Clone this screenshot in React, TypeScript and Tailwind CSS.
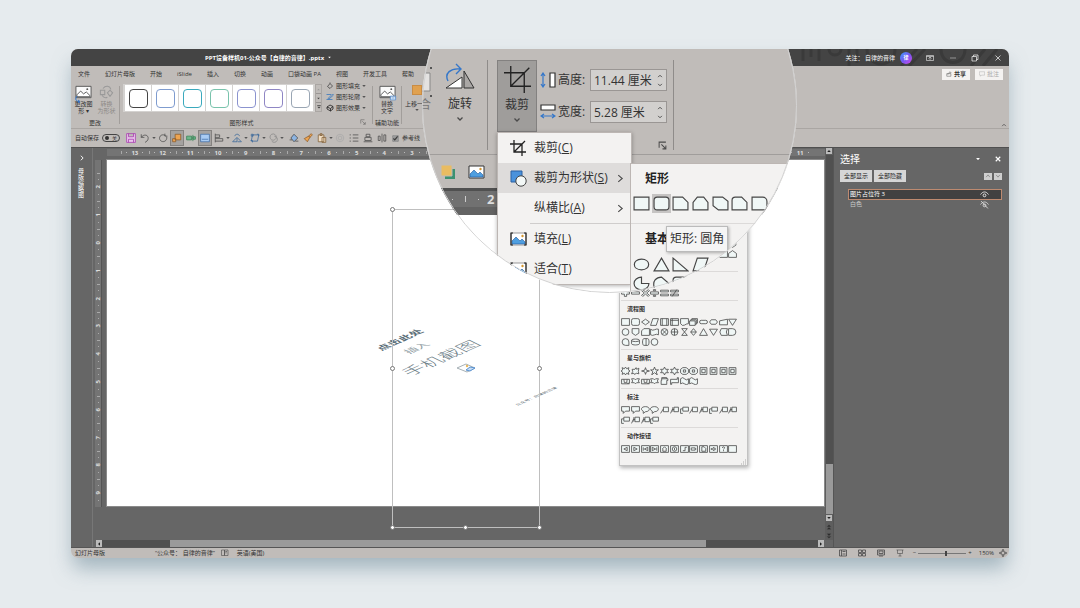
import React from "react";

/* ---------- shared drawing helpers ---------- */

type IconProps = { d: string; className?: string; stroke?: string; fill?: string; sw?: number; box?: string };

function Icon({ d, className = "size-2.5", stroke = "#4a4a4a", fill = "none", sw = 1.2, box = "0 0 16 16" }: IconProps) {
  return (
    <svg viewBox={box} className={`shrink-0 ${className}`} fill={fill} stroke={stroke} strokeWidth={sw} aria-hidden="true">
      <path d={d} />
    </svg>
  );
}

function Caret() {
  return <Icon d="M1 4l7 8 7-8z" fill="#555" stroke="none" className="size-1" />;
}

const shapes: Record<string, string> = {
  rect: "M1 1h14v12H1z",
  round: "M4 1h8a3 3 0 0 1 3 3v6a3 3 0 0 1-3 3H4a3 3 0 0 1-3-3V4a3 3 0 0 1 3-3z",
  snip: "M1 1h9l5 5v7H1z",
  snip2: "M5 1h6l4 5v7H1V6z",
  snipDiag: "M1 1h9l5 4v8H6L1 9z",
  snipRound: "M4 1h6l5 5v7H1V4a3 3 0 0 1 3-3z",
  round1: "M1 1h10a4 4 0 0 1 4 4v8H1z",
  diamond: "M8 2l7 5-7 5-7-5z",
  para: "M5 1h10l-4 12H1z",
  inner: "M1 1h14v12H1zM4 1v12M12 1v12",
  innerTop: "M1 1h14v12H1zM4 1v12M1 4h14",
  doc: "M1 1h14v9q-3.500 0-7 2.500T1 10z",
  docs: "M1 5h10v8H1zM3 5V3h10v8h-2M5 3V1h10v8h-2",
  pill: "M4 4h8a3 3 0 0 1 0 6H4a3 3 0 0 1 0-6z",
  hexa: "M4 3h8l3 4-3 4H4L1 7z",
  manual: "M1 5l14-3v10H1z",
  triDown: "M1 2h14L8 13z",
  triUp: "M8 1l7 12H1z",
  rtri: "M1 1v12h14z",
  circle: "M8 1a6 6 0 1 1 0 12A6 6 0 0 1 8 1z",
  oval: "M8 2c9 0 9 10 0 10S-1 2 8 2z",
  shield: "M2 1h12v8l-6 4-6-4z",
  card: "M5 1h10v12H1V5z",
  tape: "M1 2q3.500 3 7 1t7-1v10q-3.500-2-7 0t-7 0z",
  circX: "M8 1a6 6 0 1 1 0 12A6 6 0 0 1 8 1zM4 3l8 8M12 3l-8 8",
  circPlus: "M8 1a6 6 0 1 1 0 12A6 6 0 0 1 8 1zM8 1v12M2 7h12",
  hour: "M3 1h10L3 13h10z",
  sort: "M8 1l5 6-5 6-5-6zM3 7h10",
  stored: "M4 1h11q-4 6 0 12H4Q-1 7 4 1z",
  delay: "M1 1h7a6 6 0 0 1 0 12H1z",
  seq: "M14 13H8a6 6 0 1 1 6-6z",
  disk: "M1 4c0-3 14-3 14 0v6c0 3-14 3-14 0zM1 4c0 3 14 3 14 0",
  drum: "M5 1h7c3 0 3 12 0 12H5C2 13 2 1 5 1zM9 1v12",
  burst: "M8 0l2 3 4-2-1 4 3 2-3 2 1 4-4-2-2 3-2-3-4 2 1-4-3-2 3-2-1-4 4 2z",
  burst2: "M2 4l5 0 2-3 1 3 4-2-1 6 1 4-4-1-4 2-1-2-4 1 2-4z",
  star4: "M8 1l1.500 4.500L15 7 9.500 8.500 8 13 6.500 8.500 1 7l5.500-1.500z",
  star5: "M8 0l2 5h5l-4 3 2 6-5-4-5 4 2-6-4-3h5z",
  star6: "M8 0l2 4h5l-3 3 3 3h-5l-2 4-2-4H1l3-3-3-3h5z",
  gear: "M5 1h6l4 3v6l-4 3H5l-4-3V4zM6 5h4v4H6z",
  seal: "M2 1h12v12H2zM5 4h6v6H5z",
  ribbon: "M1 9V4h4l1 6h4l1-6h4v7h-4M1 9v3h14M5 4h6",
  ribbon2: "M1 3h5l2 2 2-2h5l-2 4 2 3h-5l-2 2-2-2H1l2-3z",
  scroll: "M3 3h11v3h-2v7H2V6h1zM3 3V1h9v2",
  scrollH: "M1 4h12V1h2v9H3v3H1z",
  wave: "M1 3q4-4 7 0t7 0v9q-4 3-7 0t-7 0z",
  call: "M1 1h14v8H8l-4 4V9H1z",
  callO: "M8 1c9 0 9 9 0 9l-4 3 0-4C-2 6 1 1 8 1z",
  line1: "M6 2h9v8H6zM6 5l-5 8",
  line2: "M7 2h8v8H7zM7 6H4l-3 7M5 2v8",
  line3: "M5 2h10v7H5zM5 5H1v8h4",
  plus: "M6 1h4v4h5v4h-5v4H6V9H1V5h5z",
  minus: "M1 5h14v4H1z",
  times: "M3 1l5 4 5-4 2 2-5 4 5 4-2 2-5-4-5 4-2-2 5-4-5-4z",
  div: "M1 5h14v4H1zM6 1h4v2H6zM6 11h4v2H6z",
  eq: "M1 2h14v3H1zM1 9h14v3H1z",
  neq: "M1 2h14v3H1zM1 9h14v3H1zM4 13L12 1",
  house: "M1 6l7-5 7 5v7H1z",
  bL: "M1 1h14v12H1zM11 4L5 7l6 3z",
  bR: "M1 1h14v12H1zM5 4l6 3-6 3z",
  bLL: "M1 1h14v12H1zM12 4L6 7l6 3zM4 4v6",
  bRR: "M1 1h14v12H1zM4 4l6 3-6 3zM12 4v6",
  bHome: "M1 1h14v12H1zM4 7l4-4 4 4M5 7v4h6V7",
  bInfo: "M1 1h14v12H1zM8 3a4 4 0 1 1 0 8 4 4 0 0 1 0-8zM8 5v4",
  bBack: "M1 1h14v12H1zM5 10h4V4h3",
  bFilm: "M1 1h14v12H1zM4 5h7v4H4zM11 7h2",
  bDoc: "M1 1h14v12H1zM5 3h4l3 3v5H5z",
  bSound: "M1 1h14v12H1zM4 6h2l3-2v6L6 8H4zM11 5v4",
  bHelp: "M1 1h14v12H1zM6 5c0-3 4-2 4 0 0 1-2 1-2 3M8 9v2",
  pie: "M8 1v6h7A7 6 0 1 1 8 1z",
  arcTop: "M2 13C-2 4 4 1 8 1l7 6v6z",
};

function Shape({ kind, large = false }: { kind: string; large?: boolean }) {
  return (
    <svg viewBox="0 0 16 14" className={large ? "w-[17px] h-[15px]" : "w-[9px] h-2"} fill="#f0f7f6" stroke="#464646" strokeWidth={large ? 1.1 : 1.4} aria-hidden="true">
      <path d={shapes[kind]} />
    </svg>
  );
}

/* ---------- title bar, tabs, ribbon ---------- */

function TitleBar() {
  return (
    <header className="relative flex h-[17px] shrink-0 items-center bg-[#444] text-[6px] text-white">
      <svg className="absolute top-0 right-0 h-full w-[210px]" viewBox="0 0 210 17" fill="none" stroke="#3a3a3a" strokeWidth="3" aria-hidden="true">
        <path d="M4 0v12M12 0v8M20 0v12M30 0c0 8 12 8 12 0M50 0v17M58 0v14M68 0c0 20 28 20 28 0M102 17l16-17M110 17l16-17M142 0c0 18 24 18 24 0M172 17l14-17M184 17l14-17" />
      </svg>
      <h1 className="ml-[134px] flex flex-1 items-center gap-1 font-bold whitespace-nowrap">
        PPT设备样机01-公众号【自律的音律】.pptx
        <Icon d="M1 4l7 8 7-8z" fill="#fff" stroke="none" className="size-[3px]" />
      </h1>
      <div className="relative flex items-center">
        <span className="mr-[5px]">关注：&nbsp;自律的音律</span>
        <span className="mr-[14px] grid size-3 place-items-center rounded-full bg-linear-to-br from-[#159dff] via-[#7256f2] to-[#d23dea] text-[5px] font-bold">
          <span className="leading-none">律</span>
        </span>
        <button aria-label="功能区显示选项" className="mr-[15px]"><Icon d="M1 3h14v10H1zM1 5h14M8 12V7M5 9l3-3 3 3" stroke="#eee" className="size-2" /></button>
        <button aria-label="最小化" className="mr-[14px]"><Icon d="M2 8h12" stroke="#ccc" className="size-2" /></button>
        <button aria-label="还原" className="mr-[15px]"><Icon d="M2 5h9v9H2zM5 5V2h9v9h-3" stroke="#eee" sw={1.5} className="size-2" /></button>
        <button aria-label="关闭" className="mr-[7px]"><Icon d="M3 3l10 10M13 3L3 13" stroke="#eee" sw={1.5} className="size-2" /></button>
      </div>
    </header>
  );
}

const tabs = ["文件", "幻灯片母版", "开始", "iSlide", "插入", "切换", "动画", "口袋动画 PA", "视图", "开发工具", "帮助"];

function Tabs() {
  return (
    <nav className="flex h-4 shrink-0 items-center gap-[15px] pr-1.5 pl-[7px]">
      {tabs.map((t) => (
        <button key={t} className="whitespace-nowrap">{t}</button>
      ))}
      <div className="ml-auto flex gap-[5px]">
        <button className="flex h-[11px] items-center gap-0.5 bg-[#f4f2f1] px-1 font-bold">
          <Icon d="M2 7h11v7H2zM5 10c0-5 3-6 7-6M10 1l3 3-3 3" className="size-1.5" />共享
        </button>
        <button className="flex h-[11px] items-center gap-0.5 bg-[#f4f2f1] px-1 text-[#aaa]">
          <Icon d="M1 2h14v9H7l-3 3v-3H1z" stroke="#aaa" className="size-1.5" />批注
        </button>
      </div>
    </nav>
  );
}

const outlines = ["border-[#444]", "border-[#7f9ccf]", "border-[#3aa9bd]", "border-[#79c3ac]", "border-[#8b93cf]", "border-[#8f86c4]", "border-[#9aa6b4]"];

function Picture({ className = "h-3.5 w-[17px]" }: { className?: string }) {
  return (
    <svg viewBox="0 0 18 14" className={className} aria-hidden="true">
      <path d="M1 1h16v12H1z" fill="#fafafa" stroke="#555" />
      <path d="M2 10l4-4 3 3 3-2 4 4v1H2z" fill="#fff" stroke="#555" />
      <circle cx="13" cy="4" r="1" fill="#555" />
    </svg>
  );
}

function Divider() {
  return <div className="my-1 w-px bg-[#a29e9b]" />;
}

function Ribbon() {
  const effects = [
    ["图形填充", "M3 9l5-6 5 5-5 5zM8 3V1", "#444"],
    ["图形轮廓", "M1 3h9M1 13h12M4 11l9-9 2 2-9 8z", "#3b78bd"],
    ["图形效果", "M2 6l6-4 6 3-5 4zM9 9v5l5-4V5M2 6v4l7 4", "#222"],
  ];
  return (
    <section aria-label="功能区" className="flex h-[47px] shrink-0 border-b border-[#aaa6a3]">
      <div className="flex w-12 flex-col items-center pt-[3px]">
        <div className="flex gap-1 text-center leading-[7px]">
          <button className="flex w-[19px] flex-col items-center">
            <span className="relative block"><Picture /><Icon d="M4 2C-1 7 2 14 9 13M6 10l4 3-4 3" stroke="#3577c9" sw={2} className="absolute -bottom-1 left-0 size-2" /></span>
            <span className="mt-0.5">更改图<br />形 ▾</span>
          </button>
          <button className="flex w-[19px] flex-col items-center text-[#8c8885]">
            <Icon d="M1 6h5v5H1zM9 9l3-3 3 3-3 4zM4 4c3-4 8-3 9 1M3 12c2 3 4 3 6 2" stroke="#999" className="h-3.5 w-[17px]" />
            <span className="mt-0.5">转换<br />为形状</span>
          </button>
        </div>
        <span className="mt-auto mb-px leading-2">更改</span>
      </div>
      <Divider />
      <div className="ml-[3px] flex flex-col pt-0.5">
        <div className="flex">
          <div className="flex h-7 items-center gap-px bg-[#d4d2d0] px-0.5">
            {outlines.map((c) => (
              <button key={c} aria-label="形状样式" className="grid h-[26px] w-[26px] place-items-center bg-white">
                <span className={`block size-[19px] rounded-[4px] border ${c}`} />
              </button>
            ))}
          </div>
          <div className="flex h-7 w-[7px] flex-col divide-y divide-[#9a9694] border border-[#aaa6a3]">
            <button className="grid flex-1 place-items-center" aria-label="上一行"><Icon d="M1 12l7-8 7 8z" fill="#999" stroke="none" className="size-[3px]" /></button>
            <button className="grid flex-1 place-items-center" aria-label="下一行"><Icon d="M1 4l7 8 7-8z" fill="#444" stroke="none" className="size-[3px]" /></button>
            <button className="grid flex-1 place-items-center" aria-label="其他"><Icon d="M1 1h14v3H1zM1 7l7 7 7-7z" fill="#444" stroke="none" className="size-1" /></button>
          </div>
          <div className="-mt-1 ml-1 flex flex-col">
            {effects.map(([t, d, c]) => (
              <button key={t} className="flex h-[11px] items-center gap-0.5 whitespace-nowrap">
                <Icon d={d} stroke={c} sw={1.6} className="size-2" />{t}<Caret />
              </button>
            ))}
          </div>
        </div>
        <div className="mt-auto mb-px flex leading-2">
          <span className="flex-1 text-center">图形样式</span>
          <Icon d="M2 12V2h10M6 6l8 8M14 8v6H8" className="size-1.5" />
        </div>
      </div>
      <div className="ml-1.5 flex">
        <Divider />
      </div>
      <div className="flex w-7 flex-col items-center pt-[3px]">
        <button className="flex flex-col items-center leading-[7px]">
          <span className="relative block">
            <Picture />
            <Icon d="M1 3h14v10H1zM4 8h8" stroke="#4a86cc" fill="#e7f0fa" sw={2} className="absolute -right-px -bottom-0.5 h-1.5 w-2" />
          </span>
          <span className="mt-0.5">替换<br />文字</span>
        </button>
        <span className="mt-auto mb-px leading-2 whitespace-nowrap">辅助功能</span>
      </div>
      <Divider />
      <button className="ml-[3px] flex flex-col items-center self-start pt-[3px] leading-[7px] whitespace-nowrap">
        <span className="block size-2.5 border border-[#c98c45] bg-[#e0a150]" />
        <span className="mt-1.5">上移一层</span>
        <Caret />
      </button>
      <button aria-label="折叠功能区" className="mt-auto mr-0.5 ml-auto"><Icon d="M3 11l5-5 5 5" sw={2} className="size-1.5" /></button>
    </section>
  );
}

type Tool = { name: string; d: string; color?: string; fill?: string; caret?: boolean; active?: boolean; gap?: boolean };

const tools: Tool[] = [
  { name: "保存", d: "M1 1h14v14H1zM4 1v5h8V1M4 15v-5h8v5", color: "#a535ae", fill: "#e9c5ec" },
  { name: "撤消", d: "M2 2v5h5M2 7C6 1 14 3 13 9c0 3-3 5-5 6", caret: true },
  { name: "重复", d: "M11 1v4h4M12 4C4 0 0 8 4 12c4 4 11 1 10-6" },
  { name: "置于顶层", d: "M5 2h9v9H5zM1 9h5v5H1z", color: "#8a5a2a", fill: "#eda451", active: true },
  { name: "对齐中部", d: "M1 5h8v6H1zM11 3v10M11 6h4v4h-4z", color: "#348153", fill: "#6fb58a" },
  { name: "占位符", d: "M1 2h14v12H1zM3 10h10", color: "#3f6ea8", fill: "#a9cbf3", active: true },
  { name: "对齐", d: "M2 1v14M2 3h7v4H2M2 9h12v4H2", caret: true },
  { name: "旋转", d: "M1 14h7V7zM9 14h6L9 8M4 5c2-4 7-4 8 0", color: "#35659a", caret: true },
  { name: "编辑形状", d: "M4 3h10L12 13H2zM2 2h3v3H2zM11 2h3v3M1 12h3v3", color: "#35659a", caret: true },
  { name: "合并形状", d: "M6 2a5 5 0 1 1 0 9 5 5 0 0 1 0-9zM10 5a5 5 0 1 1-4 8", color: "#888", caret: true },
  { name: "填充", d: "M3 8l5-6 6 6-6 6zM1 11h4M10 13h5", color: "#444", fill: "#8cb4e2", gap: true },
  { name: "格式刷", d: "M9 5l4-4 2 2-4 4zM9 5L2 9l5 5 4-7z", color: "#8a5a2a", fill: "#eda451" },
  { name: "粘贴", d: "M2 3h9v11H2zM5 1h3v3H5zM8 7h6v8H8z", color: "#7c5b33", fill: "#f1ddc2", caret: true },
  { name: "录制", d: "M8 2a6 6 0 1 1 0 12A6 6 0 0 1 8 2zM8 5a3 3 0 1 1 0 6 3 3 0 0 1 0-6z", color: "#aaa" },
  { name: "项目符号", d: "M1 3h2M6 3h9M1 8h2M6 8h9M1 13h2M6 13h9" },
  { name: "居中", d: "M1 14h14M5 2h6v4H5zM3 7h10v5H3z" },
  { name: "分布", d: "M8 1v14M2 5h3v7H2zM11 3h3v10h-3z" },
];

function QuickAccess() {
  return (
    <div role="toolbar" aria-label="快速访问工具栏" className="flex h-[18px] shrink-0 items-center pl-1">
      <label className="flex items-center gap-[3px]">
        自动保存
        <span className="relative flex h-2 w-[18px] items-center">
          <input type="checkbox" className="absolute inset-0 appearance-none rounded-full border border-[#444]" />
          <span className="relative ml-[3px] size-1 rounded-full bg-[#333]" />
          <span className="relative ml-[3px] text-[5px] leading-none">关</span>
        </span>
      </label>
      <div className="ml-1 flex items-center">
        {tools.map((t) => (
          <div key={t.name} className={`flex items-center ${t.gap ? "ml-[3px]" : ""}`}>
            <button aria-label={t.name} className={`grid h-4 w-3.5 place-items-center ${t.active ? "border border-[#858280] bg-[#a5a2a0]" : ""}`}>
              <Icon d={t.d} stroke={t.color} fill={t.fill} className="size-2.5" />
            </button>
            {t.caret && <Caret />}
          </div>
        ))}
      </div>
      <label className="ml-[3px] flex items-center gap-[3px]">
        <input type="checkbox" defaultChecked className="size-[7px] accent-[#999]" />
        参考线
      </label>
    </div>
  );
}

/* ---------- workspace ---------- */

const horizontal = [13, 12, 11, 10, 9, 8, 7, 6, 5, 4, 3, 2, 1, 0, 1, 2, 3, 4, 5, 6, 7, 8, 9, 10, 11];
const vertical = [2, 1, 0, 1, 2, 3, 4, 5, 6, 7, 8, 9];

function IsoText({ className, children }: { className: string; children: React.ReactNode }) {
  return (
    <span className={`absolute block leading-none whitespace-nowrap [transform:matrix(0.9,-0.4,0.7,0.35,0,0)] ${className}`}>{children}</span>
  );
}

function Handle({ className }: { className: string }) {
  return <span className={`absolute size-[5px] rounded-full border border-[#777] bg-white ${className}`} />;
}

function Editor() {
  return (
    <main className="relative flex min-w-0 flex-1 flex-col">
      <div className="flex min-h-0 flex-1">
        <div className="flex w-[13px] shrink-0 flex-col pt-3 pb-[33px] pl-0.5">
          <div className="flex w-[7px] flex-1 flex-col border-r border-[#555] bg-[#747474] pt-[13px] text-[6px] leading-none font-bold text-[#ddd]">
            {vertical.map((n, i) => (
              <div key={i} className="flex min-h-0 flex-1 flex-col items-center justify-between">
                <i className="h-px w-[3px] bg-[#aaa]" />
                <i className="size-px bg-[#aaa]" />
                <span className="rotate-180 [writing-mode:vertical-rl]">{n}</span>
                <i className="size-px bg-[#aaa]" />
                <i className="h-px" />
              </div>
            ))}
          </div>
        </div>
        <div className="flex min-w-0 flex-1 flex-col">
          <div className="mt-px ml-px flex h-[7px] shrink-0 items-center bg-[#747474] pr-[11px] pl-3.5 text-[6px] leading-none font-bold text-[#ddd]">
            {horizontal.map((n, i) => (
              <span key={i} className="flex min-w-0 flex-1 items-center justify-between">
                <i className="h-[3px] w-px bg-[#aaa]" />
                <i className="size-px bg-[#bbb]" />
                {n}
                <i className="size-px bg-[#bbb]" />
                <i className="w-px" />
              </span>
            ))}
          </div>
          <div className="relative mt-[3px] mb-[33px] flex-1 border border-[#8a8a8a] bg-white">
            <IsoText className="top-[174px] left-[269px] text-[12px] font-bold text-[#5b6e78]">点击此处</IsoText>
            <IsoText className="top-[182px] left-[298px] text-[12px] text-[#8e9ba2]">插入</IsoText>
            <IsoText className="top-[188px] left-[294px] text-[20px] font-light text-[#6d7e87]">手机截图</IsoText>
            <IsoText className="top-[234px] left-[407px] text-[5px] text-[#5f6e76]">公众号：自律的音律</IsoText>
            <svg className="absolute top-[203px] left-[349px] h-2.5 w-5" viewBox="0 0 20 10" fill="none" aria-hidden="true">
              <path d="M1 5l9-4 9 4-8 4z" stroke="#a7b1b6" />
              <path d="M10 7l4-3 5 1-5 3z" fill="#c6dcf3" stroke="#5a93d2" />
              <circle cx="11" cy="3" r="1.200" fill="#e9b85c" />
            </svg>
          </div>
        </div>
        <div className="flex w-2 shrink-0 flex-col items-center gap-px bg-[#5e5e5e]">
          <button aria-label="向上滚动" className="grid size-1.5 place-items-center bg-[#bbb]"><Icon d="M1 12l7-8 7 8z" fill="#222" stroke="none" className="size-1" /></button>
          <div className="flex w-[7px] flex-1 flex-col bg-[#505050]">
            <div className="mt-auto h-[50px] bg-[#9a9a9a]" />
          </div>
          <button aria-label="向下滚动" className="grid size-1.5 place-items-center bg-[#bbb]"><Icon d="M1 4l7 8 7-8z" fill="#222" stroke="none" className="size-1" /></button>
          <div className="flex h-[18px] flex-col justify-around">
            <button aria-label="上一张"><Icon d="M3 7l5-5 5 5zM3 14l5-5 5 5z" fill="#222" className="size-1.5" /></button>
            <button aria-label="下一张"><Icon d="M3 2l5 5 5-5zM3 9l5 5 5-5z" fill="#222" className="size-1.5" /></button>
          </div>
        </div>
      </div>
      <div className="mr-[9px] ml-[3px] flex h-[7px] shrink-0 bg-[#505050]">
        <button aria-label="向左滚动" className="grid w-1.5 place-items-center bg-[#bbb]"><Icon d="M12 1L4 8l8 7z" fill="#222" stroke="none" className="size-1" /></button>
        <div className="mr-[112px] ml-[68px] flex-1 bg-[#9a9a9a]" />
        <button aria-label="向右滚动" className="grid w-1.5 place-items-center bg-[#bbb]"><Icon d="M4 1l8 7-8 7z" fill="#222" stroke="none" className="size-1" /></button>
      </div>
      <div className="absolute top-[61px] left-[299px] h-[319px] w-[148px] border border-[#bfbfbf]">
        <Handle className="-top-[3px] -left-[3px]" />
        <Handle className="top-[156px] -left-[3px]" />
        <Handle className="top-[156px] -right-[3px]" />
        <Handle className="-bottom-[3px] -left-[3px]" />
        <Handle className="-bottom-[3px] left-[70px]" />
        <Handle className="-right-[3px] -bottom-[3px]" />
      </div>
    </main>
  );
}

function SelectionPane() {
  return (
    <aside className="w-[176px] shrink-0 border-l border-[#555] pr-[7px] pl-1.5 text-white">
      <div className="flex h-[22px] items-center">
        <h2 className="flex-1 text-[10px]">选择</h2>
        <button aria-label="任务窗格选项" className="mr-[14px]"><Icon d="M3 5l5 6 5-6z" fill="#fff" stroke="none" className="size-1.5" /></button>
        <button aria-label="关闭窗格" className="mr-px"><Icon d="M2 2l12 12M14 2L2 14" stroke="#fff" sw={3} className="size-1.5" /></button>
      </div>
      <div className="flex items-center gap-0.5 text-[#222]">
        <button className="h-3 w-8 bg-[#d6d6d6] leading-3">全部显示</button>
        <button className="h-3 w-8 bg-[#d6d6d6] leading-3">全部隐藏</button>
        <button aria-label="上移" className="ml-auto grid h-[7px] w-2 place-items-center bg-[#cfcfcf]"><Icon d="M3 11l5-6 5 6" className="size-1.5" /></button>
        <button aria-label="下移" className="grid h-[7px] w-2 place-items-center bg-[#cfcfcf]"><Icon d="M3 5l5 6 5-6" className="size-1.5" /></button>
      </div>
      <ul className="mt-[7px] ml-2 leading-[9px]">
        <li className="flex h-[11px] items-center justify-between border border-[#bd8a70] bg-[#414141] pr-3 pl-px">
          图片占位符 3
          <Icon d="M1 8c4-6 10-6 14 0M8 7a2.500 2.500 0 1 1 0 5 2.500 2.500 0 0 1 0-5z" stroke="#eee" sw={1.6} className="size-[9px]" />
        </li>
        <li className="flex h-[9px] items-center justify-between pr-[13px] pl-0.5 text-[#ccc]">
          白色
          <Icon d="M1 8c4-6 10-6 14 0M8 7a2.500 2.500 0 1 1 0 5 2.500 2.500 0 0 1 0-5zM2 2l12 13" stroke="#ddd" sw={1.6} className="size-[9px]" />
        </li>
      </ul>
    </aside>
  );
}

function StatusBar() {
  return (
    <footer className="flex h-[11px] shrink-0 items-center border-t border-[#555] pr-0.5 pl-1">
      <span className="w-20">幻灯片母版</span>
      <span>“公众号：&nbsp;自律的音律”</span>
      <Icon d="M1 2h6v11H1zM7 2h7v11H7zM9 5h3M10 5v4" className="mr-2 ml-1.5 size-2" />
      <span className="flex-1">英语(美国)</span>
      <div className="flex items-center gap-[11px]">
        <button aria-label="普通"><Icon d="M1 2h14v12H1zM5 2v12M7 10h6M7 5h6" sw={1.6} className="size-2" /></button>
        <button aria-label="幻灯片浏览"><Icon d="M1 2h6v5H1zM9 2h6v5H9zM1 9h6v5H1zM9 9h6v5H9z" sw={1.6} className="size-2" /></button>
        <button aria-label="阅读视图"><Icon d="M1 2h14v10H1zM4 4h8v5H4zM4 14h8" sw={1.6} className="size-2" /></button>
        <button aria-label="幻灯片放映"><Icon d="M1 2h14M3 2v7h10V2M8 9v5M5 14h6" className="size-2" /></button>
      </div>
      <button aria-label="缩小" className="ml-[9px] leading-none">−</button>
      <input
        type="range" aria-label="显示比例" defaultValue={58}
        className="mx-0.5 h-2 w-12 appearance-none bg-transparent [&::-webkit-slider-runnable-track]:h-px [&::-webkit-slider-runnable-track]:bg-[#777] [&::-webkit-slider-thumb]:-mt-[2px] [&::-webkit-slider-thumb]:h-[5px] [&::-webkit-slider-thumb]:w-0.5 [&::-webkit-slider-thumb]:appearance-none [&::-webkit-slider-thumb]:bg-[#444]"
      />
      <button aria-label="放大" className="leading-none">+</button>
      <span className="ml-[7px]">150%</span>
      <button aria-label="适应窗口" className="ml-[5px]"><Icon d="M5 5h6v6H5zM8 0l2 3H6zM8 16l2-3H6zM0 8l3-2v4zM16 8l-3-2v4z" className="size-2" /></button>
    </footer>
  );
}

/* ---------- shape gallery menu ---------- */

const gallery: { title: string; rows: string[] }[] = [
  {
    title: "基本形状",
    rows: [
      "oval triUp rtri para manual diamond hexa circle circle circle circle circle",
      "pie arcTop delay rect inner snip plus rect disk rect oval shield",
      "oval circle pie star4 circle doc tape rect round rect rect house",
      "rect round rect round",
    ],
  },
  { title: "公式形状", rows: ["plus minus times div eq neq"] },
  {
    title: "流程图",
    rows: [
      "rect round diamond para inner innerTop doc docs pill hexa manual triDown",
      "circle shield card tape circX circPlus hour sort triUp triDown stored delay",
      "seq disk drum circle",
    ],
  },
  {
    title: "星与旗帜",
    rows: ["burst burst2 star4 star5 star6 star6 gear gear seal seal seal seal", "ribbon ribbon2 ribbon ribbon2 scroll scrollH wave wave"],
  },
  {
    title: "标注",
    rows: ["call call callO callO line1 line2 line3 line1 line2 line3 line1 line2", "line3 line2 line2 line3"],
  },
  { title: "动作按钮", rows: ["bL bR bLL bRR bHome bInfo bBack bFilm bDoc bSound bHelp rect"] },
];

function ShapeGallery() {
  return (
    <div className="absolute top-[163px] left-[548px] w-[129px] border border-[#c2c2c2] bg-[#f3f2f1] shadow-[1px_2px_4px_rgba(0,0,0,0.3)]">
      {gallery.map((g) => (
        <section key={g.title} className="mr-[9px] ml-px border-b border-[#dcdad9] pb-0.5 last-of-type:border-b-0">
          <h3 className="h-4 pl-1.5 leading-4 font-bold">{g.title}</h3>
          {g.rows.map((row, r) => (
            <div key={r} className="grid h-2.5 grid-cols-12 items-center">
              {row.split(" ").map((k, i) => (
                <Shape key={i} kind={k} />
              ))}
            </div>
          ))}
        </section>
      ))}
      <Icon d="M12 6h2M12 10h2M8 10h2M12 14h2M8 14h2M4 14h2" stroke="#aaa" sw={2} className="mt-px ml-auto size-2" />
    </div>
  );
}

/* ---------- magnifying lens ---------- */

function SizeField({ label, value, d, box }: { label: string; value: string; d: string; box: string }) {
  return (
    <div className="flex h-[22px] items-center">
      <svg viewBox="0 0 16 16" className="size-4" fill="none" aria-hidden="true">
        <path d={box} fill="#fff" stroke="#333" strokeWidth="1.2" />
        <path d={d} stroke="#3577c9" strokeWidth="1.2" />
      </svg>
      <label className="ml-0.5 flex items-center">
        <span className="w-8">{label}:</span>
        <input defaultValue={value} className="h-[22px] w-[63px] border border-r-0 border-[#9a9694] bg-[#d2d0ce] pl-[3px] outline-none" />
      </label>
      <div className="flex h-[22px] w-[14px] flex-col items-center justify-around border border-l-0 border-[#9a9694] bg-[#d2d0ce] py-px">
        <button aria-label={`增加${label}`}><Icon d="M3 11l5-5 5 5" sw={2.5} className="size-1.5" /></button>
        <button aria-label={`减少${label}`}><Icon d="M3 5l5 5 5-5" sw={2.5} className="size-1.5" /></button>
      </div>
    </div>
  );
}

const cropPath = "M4 0v12h12M0 4h12v12M4 12L15 1";

function ScenePicture({ framed }: { framed?: boolean }) {
  return (
    <svg viewBox="0 0 17 14" className="h-3.5 w-[17px]" fill="none" aria-hidden="true">
      <path d="M1 1h15v12H1z" fill="#fff" stroke={framed ? "#999" : "#333"} />
      <path d="M2 12V9l4-4 4 4 2-2 3 3v2z" fill="#4f9fe0" stroke="#24579b" strokeWidth=".6" />
      <circle cx="12.500" cy="4" r="1.200" fill="#d5962f" />
      {framed && <path d="M3 1H1v12h2M14 1h2v12h-2" stroke="#222" strokeWidth="1.200" />}
    </svg>
  );
}

function MenuItem({ icon, text, hotkey, more, active }: { icon?: React.ReactNode; text: string; hotkey: string; more?: boolean; active?: boolean }) {
  return (
    <button role="menuitem" className={`flex h-[30px] w-full shrink-0 items-center pl-3 ${active ? "bg-[#dedcdb]" : ""}`}>
      <span className="w-6">{icon}</span>
      <span>{text}(<u>{hotkey}</u>)</span>
      {more && <Icon d="M4 2l7 6-7 6" sw={2} className="mr-1.5 ml-auto size-[9px]" />}
    </button>
  );
}

function LensShapes({ kinds, selected }: { kinds: string[]; selected?: number }) {
  return (
    <div className="ml-px grid w-[137px] grid-cols-7">
      {kinds.map((k, i) => (
        <button key={i} aria-label={k} className={`grid h-[19px] place-items-center ${selected === i ? "bg-[#c6c4c3]" : ""}`}>
          <Shape kind={k} large />
        </button>
      ))}
    </div>
  );
}

function Lens() {
  return (
    <div className="absolute -top-[131px] left-[351px] size-[375px] overflow-hidden rounded-full bg-white text-[12px] leading-4 text-[#333]">
      <div className="flex h-full flex-col pt-[131px]">
        <div className="flex h-[106px] shrink-0 items-start border-b border-[#a09d9b] bg-[#c0bcb9] pt-[11px]">
          <div className="w-[14px] pt-[7px]">
            <svg viewBox="0 0 14 32" className="h-8 w-3.5" aria-hidden="true">
              <path d="M0 6h8v18H0" fill="#e4e2e1" stroke="#888" />
              <path d="M8 0h2v2H8zM8 28h2v2H8z" fill="#555" />
            </svg>
            <span className="-ml-[3px] block w-3 leading-none text-[#777]">合</span>
          </div>
          <button className="mt-[3px] flex w-12 flex-col items-center">
            <svg viewBox="0 0 30 26" className="h-[26px] w-[30px]" fill="none" aria-hidden="true">
              <path d="M1 25L17 14v11z" fill="#fff" stroke="#333" />
              <path d="M19 8v17h10z" fill="#aaa7a5" stroke="#333" />
              <path d="M3 18C-1 10 6 5 15 6M11 1l5 5-5 5" stroke="#3577c9" strokeWidth="1.400" />
            </svg>
            <span className="mt-[7px]">旋转</span>
            <Icon d="M3 5l5 5 5-5" sw={2.500} className="mt-[3px] size-2" />
          </button>
          <div className="mr-[9px] ml-[3px] h-[90px] w-px bg-[#8f8c8a]" />
          <button className="flex h-[72px] w-10 flex-col items-center border border-[#838180] bg-[#9f9d9b] pt-[5px]">
            <Icon d={cropPath} sw={0.8} stroke="#222" className="size-[27px]" />
            <span className="mt-1">裁剪</span>
            <Icon d="M3 5l5 5 5-5" sw={2.500} className="mt-[3px] size-2" />
          </button>
          <div className="ml-[3px] flex h-[90px] flex-col gap-[10px] pt-[9px]">
            <SizeField label="高度" value="11.44 厘米" box="M10 1h5v14h-5z" d="M3 1v14M1 4l2-3 2 3M1 12l2 3 2-3" />
            <SizeField label="宽度" value="5.28 厘米" box="M1 1h14v5H1z" d="M1 12h14M4 10l-3 2 3 2M12 10l3 2-3 2" />
            <Icon d="M2 12V2h12M6 6l8 8M14 8v6H8" sw={1.800} className="mt-auto size-[9px] self-end" />
          </div>
          <div className="ml-1.5 h-[90px] w-px bg-[#8f8c8a]" />
        </div>
        <div className="flex h-[33px] shrink-0 items-center gap-[13px] bg-[#c0bcb9] pl-[19px]">
          <svg viewBox="0 0 14 14" className="size-3.5" aria-hidden="true">
            <path d="M4 4h10v10H4z" fill="#3c9171" />
            <path d="M0 0h11v11H0z" fill="#e9bc62" stroke="#c0bcb9" />
          </svg>
          <ScenePicture />
        </div>
        <div className="flex h-[27px] shrink-0 items-center gap-3 border-t-[3px] border-b-8 border-t-[#505050] border-b-[#636363] bg-[#717171] pl-[30px] text-[13px] font-bold text-[#ddd]">
          <i className="size-px bg-[#ccc]" />
          <i className="h-1.5 w-px bg-[#ccc]" />
          <i className="size-px bg-[#ccc]" />
          <span className="-ml-1">2</span>
        </div>
      </div>

      <div role="menu" className="absolute top-[214px] left-[75px] flex w-[135px] flex-col border border-[#bcb6b3] bg-[#f3f2f1] shadow-[0_1px_4px_rgba(0,0,0,0.3)]">
        <MenuItem icon={<Icon d={cropPath} sw={1.300} stroke="#222" className="size-4" />} text="裁剪" hotkey="C" />
        <MenuItem
          active more text="裁剪为形状" hotkey="S"
          icon={
            <svg viewBox="0 0 17 17" className="size-[17px]" aria-hidden="true">
              <path d="M1 1h11v11H1z" fill="#4a92dc" stroke="#2b61a3" />
              <circle cx="11" cy="11" r="5.200" fill="#f3f8f7" stroke="#444" />
            </svg>
          }
        />
        <MenuItem more text="纵横比" hotkey="A" />
        <div className="ml-8 h-px shrink-0 bg-[#cfcdcc]" />
        <MenuItem icon={<ScenePicture framed />} text="填充" hotkey="L" />
        <MenuItem icon={<ScenePicture framed />} text="适合" hotkey="T" />
      </div>

      <div role="menu" aria-label="裁剪为形状" className="absolute top-[245px] left-[208px] h-[130px] w-[167px] overflow-hidden border border-[#bcb6b3] bg-[#f3f2f1] text-[#222]">
        <h3 className="pt-[7px] pl-3.5 font-bold">矩形</h3>
        <div className="mt-[7px] border-b border-[#dcdad9] pb-2.5">
          <LensShapes selected={1} kinds={["rect", "round", "snip", "snip2", "snipDiag", "snipRound", "round1"]} />
        </div>
        <h3 className="pt-[7px] pb-2 pl-3.5 font-bold">基本形状</h3>
        <LensShapes kinds={["oval", "triUp", "rtri", "para"]} />
        <LensShapes kinds={["pie", "arcTop", "round"]} />
      </div>
      <div role="tooltip" className="absolute top-[308px] left-[244px] border border-[#bbb] bg-[#f5f5f5] px-[3px] py-1 whitespace-nowrap shadow-[1px_1px_3px_rgba(0,0,0,0.3)]">矩形: 圆角</div>
      <div className="pointer-events-none absolute inset-0 rounded-full border border-[#d3d3d3]" />
    </div>
  );
}

export default function App() {
  return (
    <div className="flex min-h-screen bg-[#e6ebee] px-[71px] pt-[49px] pb-[50px] [font-family:'Open_Sans','Noto_Sans_CJK_SC',sans-serif]">
      <div className="flex min-w-0 flex-1 rounded-[7px] shadow-[0_12px_20px_-2px_rgba(105,135,150,0.55)]">
        <div className="relative flex min-w-0 flex-1 flex-col overflow-hidden rounded-[7px] bg-[#c0bcb9] text-[6px] leading-2 text-[#333]">
          <TitleBar />
          <Tabs />
          <Ribbon />
          <QuickAccess />
          <div className="flex min-h-[400px] flex-1 border-t border-[#505050] bg-[#666]">
            <div className="flex w-[22px] shrink-0 flex-col items-center border-r border-[#777] pt-[7px] text-white">
              <button aria-label="展开缩略图"><Icon d="M5 2l6 6-6 6" stroke="#fff" sw={2.500} className="size-1.5" /></button>
              <span className="mt-[7px] mr-0.5 [writing-mode:vertical-rl]">母版缩略图</span>
            </div>
            <Editor />
            <SelectionPane />
          </div>
          <StatusBar />
          <ShapeGallery />
          <Lens />
        </div>
      </div>
    </div>
  );
}
